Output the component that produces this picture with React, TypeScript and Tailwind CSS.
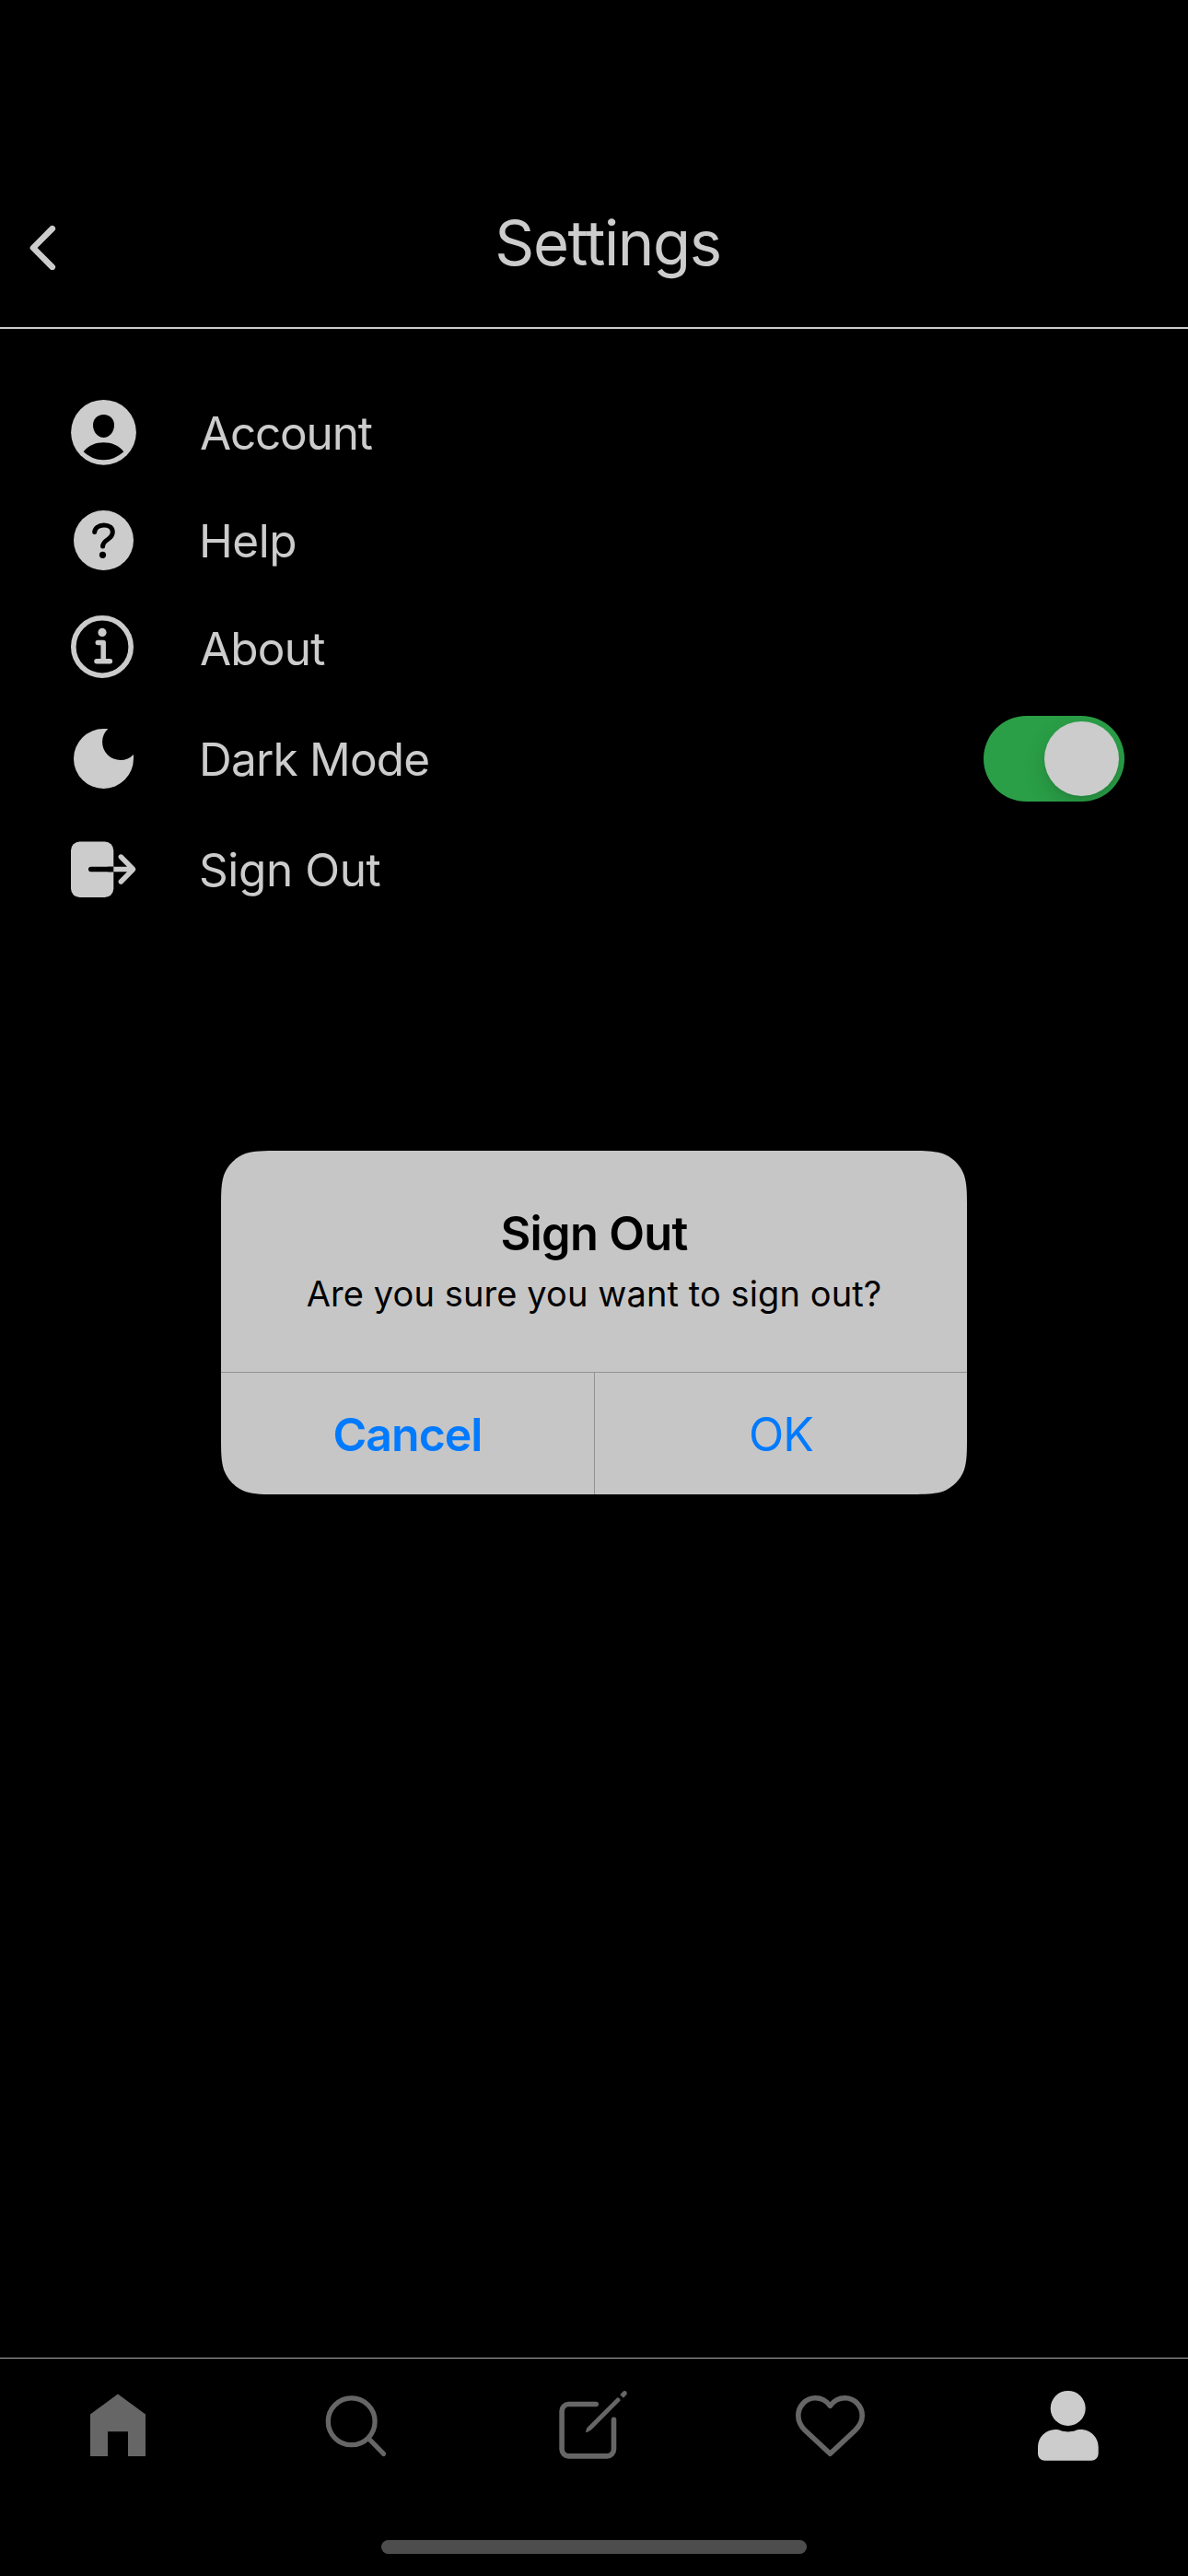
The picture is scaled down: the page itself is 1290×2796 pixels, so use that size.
import type { ReactNode } from "react";

function ListIcon({ children }: { children: ReactNode }) {
  return (
    <svg className="h-[73px] w-[72px] shrink-0 overflow-visible" viewBox="0 0 72 73" fill="none">
      {children}
    </svg>
  );
}

function NavIcon({ children, label, active = false }: { children: ReactNode; label: string; active?: boolean }) {
  return (
    <button aria-label={label} className={active ? "flex justify-center text-[#cccccc]" : "flex justify-center text-[#666666]"}>
      <svg className="h-[78px] w-[78px] overflow-visible" viewBox="0 0 78 78" fill="none">
        {children}
      </svg>
    </button>
  );
}

const accountIcon = (
  <ListIcon>
    <circle cx="35.5" cy="36.3" r="35.4" fill="currentColor" />
    <path d="M35.5 17C42.5 17 47.3 22 47 29C46.6 36.500 41.500 42 35.500 42S24.400 36.500 24 29C23.700 22 28.500 17 35.500 17Z" fill="#000" />
    <path d="M13.700 57.300C19 50.500 27 47.300 35.500 47.300S52 50.500 57.300 57.300C51 63 43.500 66.300 35.500 66.300S19.500 63 13.700 57.300Z" fill="#000" />
  </ListIcon>
);

const helpIcon = (
  <ListIcon>
    <circle cx="35.5" cy="36.5" r="32.5" fill="currentColor" />
    <path d="M25.700 27.500C26 23.300 30 19.900 35.800 19.900C41.500 19.900 45.300 23 45.300 27.500C45.300 31.500 43 33.500 40 35.500C36.800 37.700 34.600 39.500 34.600 43" stroke="#000" strokeWidth="5" strokeLinecap="round" />
    <circle cx="34.500" cy="52.300" r="3.600" fill="#000" />
  </ListIcon>
);

const aboutIcon = (
  <ListIcon>
    <circle cx="34" cy="35" r="31.2" stroke="currentColor" strokeWidth="5.600" />
    <circle cx="34" cy="19.400" r="4.600" fill="currentColor" />
    <path d="M29.300 30.500H35.200V50.700M28 50.700H42.400" stroke="currentColor" strokeWidth="5.500" strokeLinecap="round" strokeLinejoin="round" />
  </ListIcon>
);

const moonIcon = (
  <ListIcon>
    <path d="M40.300 4A19.700 19.700 0 1 0 68 32V36.300A32.500 32.500 0 1 1 35.500 3.900C37.200 3.900 38.800 3.900 40.300 4Z" fill="currentColor" />
  </ListIcon>
);

const signOutIcon = (
  <ListIcon>
    <rect x="0" y="6.500" width="46.300" height="60.500" rx="9.500" fill="currentColor" />
    <path d="M21.800 36.500H46" stroke="#000" strokeWidth="5.600" strokeLinecap="round" />
    <path d="M46.300 36.500H67M54.300 23L67.600 36.500L54.300 50" stroke="currentColor" strokeWidth="5.400" strokeLinecap="round" strokeLinejoin="round" />
    <path d="M40 36.500H46.300" stroke="#000" strokeWidth="5.600" />
  </ListIcon>
);

function Switch() {
  return (
    <button role="switch" aria-checked="true" aria-label="Dark Mode" className="ml-auto flex h-[93px] w-[153px] justify-end overflow-hidden rounded-full bg-[#2a9f47] p-[6px]">
      <span className="size-[81px] rounded-full bg-[#cccccc] shadow-[0_9px_24px_rgba(0,0,0,0.15),0_3px_3px_rgba(0,0,0,0.05)]" />
    </button>
  );
}

function Row({ icon, label, labelClass, tall = false, children }: { icon: ReactNode; label: string; labelClass: string; tall?: boolean; children?: ReactNode }) {
  return (
    <li className={tall ? "flex h-[123px] items-center" : "flex h-[117px] items-center"}>
      {icon}
      <span className={labelClass}>{label}</span>
      {children}
    </li>
  );
}

function SignOutDialog() {
  return (
    <div role="dialog" className="absolute top-[1249px] left-[240px] flex h-[373px] w-[810px] flex-col bg-[#c6c6c6] text-center text-black [clip-path:path('M64.2_0H745.8C764.3_0_773.5_0_783.5_3.1C794.3_7.1_802.9_15.7_806.9_26.5C810_36.5_810_45.7_810_64.2V308.8C810_327.3_810_336.5_806.9_346.5C802.9_357.3_794.3_365.9_783.5_369.9C773.5_373_764.3_373_745.8_373H64.2C45.7_373_36.5_373_26.5_369.9C15.7_365.9_7.1_357.3_3.1_346.5C0_336.5_0_327.3_0_308.8V64.2C0_45.7_0_36.5_3.1_26.5C7.1_15.7_15.7_7.1_26.5_3.1C36.5_0_45.7_0_64.2_0Z')]">
      <div className="h-[240px] pt-[60px]">
        <h2 className="text-[50.5px] leading-[60px] font-semibold tracking-[-0.7px]">Sign Out</h2>
        <p className="mt-[8px] text-[38px] leading-[54px] tracking-[0.1px]">Are you sure you want to sign out?</p>
      </div>
      <div className="flex h-[133px] border-t border-[#929292] text-[50px] text-[#007aff]">
        <button className="w-[406px] border-r border-[#929292] pt-[2px] font-semibold tracking-[-1px]">Cancel</button>
        <button className="flex-1 pt-[2px] tracking-[-0.9px]">OK</button>
      </div>
    </div>
  );
}

export default function App() {
  return (
    <div className="relative flex h-[2796px] w-[1290px] flex-col overflow-hidden bg-black font-['Inter',sans-serif] text-[#cccccc]">
      <header className="grid h-[357px] grid-cols-[90px_1fr_60px] items-center border-b-2 border-[#cccccc] pt-[181px]">
        <svg className="ml-[30px] h-[50px] w-[32px]" viewBox="0 0 32 50" fill="none">
          <path d="M26.800 5.200L6 26L26.800 46.800" stroke="currentColor" strokeWidth="6.600" strokeLinecap="round" strokeLinejoin="round" />
        </svg>
        <h1 className="mb-[8px] text-center text-[67px] leading-[80px] tracking-[-1.4px]">Settings</h1>
      </header>

      <ul className="flex flex-1 flex-col pt-[54px] pr-[69px] pl-[77px] text-[49.5px] leading-[60px]">
        <Row icon={accountIcon} label="Account" labelClass="ml-[68px] tracking-[-1.2px]" />
        <Row icon={helpIcon} label="Help" labelClass="ml-[67px] tracking-[-0.5px]" />
        <Row icon={aboutIcon} label="About" labelClass="ml-[68px] tracking-[-0.8px]" />
        <Row icon={moonIcon} label="Dark Mode" labelClass="ml-[67px] tracking-[-0.8px]" tall>
          <Switch />
        </Row>
        <Row icon={signOutIcon} label="Sign Out" labelClass="ml-[67px] tracking-[-0.4px]" />
      </ul>

      <nav className="grid h-[198px] grid-cols-5 items-start border-t border-[#adadad] pt-[34px]">
        <NavIcon label="Home">
          <path d="M38 4.500L68 26.400V72H49V45.300H27V72H8V26.400Z" fill="currentColor" />
        </NavIcon>
        <NavIcon label="Search">
          <circle cx="33.700" cy="34.300" r="25.400" stroke="currentColor" strokeWidth="5.300" />
          <path d="M52.500 53L68.600 69.400" stroke="currentColor" strokeWidth="5.200" strokeLinecap="round" />
        </NavIcon>
        <NavIcon label="Compose">
          <path d="M41.200 15.500H11.600A7.500 7.500 0 0 0 4.100 23V64.400A7.500 7.500 0 0 0 11.600 71.900H53A7.500 7.500 0 0 0 60.500 64.400V32.200" stroke="currentColor" strokeWidth="5.600" strokeLinecap="round" />
          <path d="M64.300 8.300C65.800 8.300 67.700 10 67.700 11.600L36.200 43.200C35 44.300 32 45.600 30 46.200C30.200 44.300 30.900 41.500 32 40.400Z" fill="currentColor" />
          <path d="M67.300 5.300L70.200 2C71.500 0.700 73.600 0.900 74.400 2.200C75 3.300 74.900 4.400 74 5.500L70.900 8.700Z" fill="currentColor" />
        </NavIcon>
        <NavIcon label="Likes">
          <path d="M37.400 17.300C33.500 12 27.500 8.800 21.300 8.800C11 8.800 2.800 17.500 2.800 28C2.800 35 6 39.800 10 43.700L37.400 69.200L64.700 43.700C68.700 39.800 72.200 35 72.200 28C72.200 17.500 63.800 8.800 53.500 8.800C47.200 8.800 41.300 12 37.400 17.300Z" stroke="currentColor" strokeWidth="5.600" strokeLinejoin="round" />
        </NavIcon>
        <NavIcon label="Profile" active>
          <circle cx="37.700" cy="19.900" r="19" fill="currentColor" />
          <path d="M24 43C26.500 43 27.700 43.300 29.500 44C32 45 35 45.400 37.700 45.400C40.500 45.400 43.500 45 46 44C47.700 43.300 49 43 51.700 43C62 43 70.700 51.500 70.700 62V69C70.700 73.500 67.200 76.700 63 76.700H12.700C8.300 76.700 5 73.500 5 69V62C5 51.500 13.500 43 24 43Z" fill="currentColor" />
        </NavIcon>
      </nav>
      <div className="mb-[24px] h-[15px] w-[462px] shrink-0 self-center rounded-full bg-[#4d4d4d]" />

      <SignOutDialog />
    </div>
  );
}
